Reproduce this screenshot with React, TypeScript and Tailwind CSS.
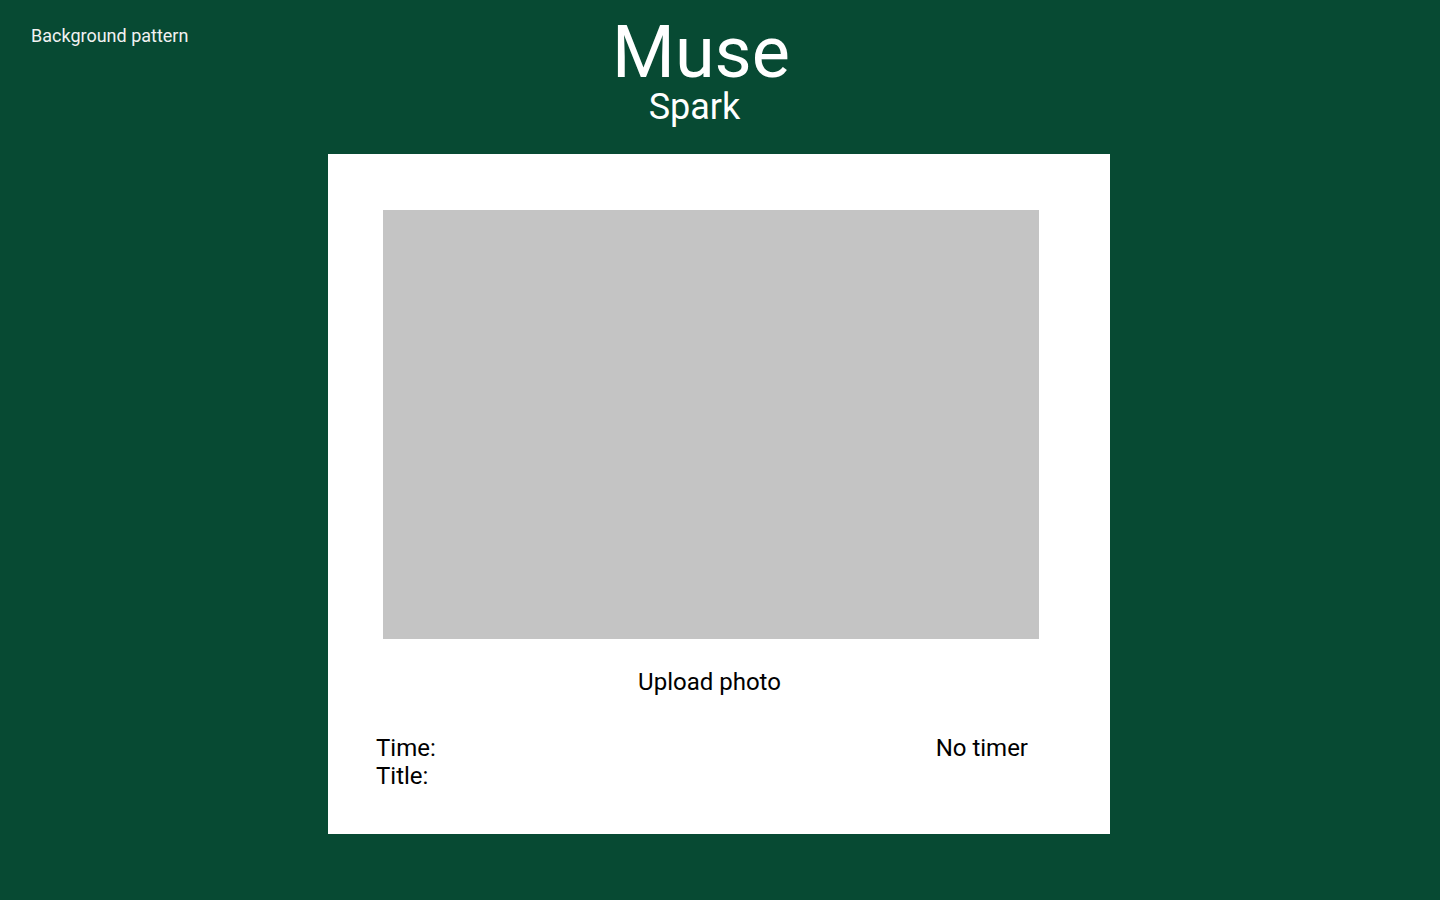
function App() {
  return (
    <div className="min-h-[900px] w-full bg-[#074a33] font-['Roboto',sans-serif]">
      <header className="grid grid-cols-[1fr_auto_1fr]">
        <div className="pl-[31px] pt-[24px]">
          <span className="text-[18px] leading-6 text-[#f2f2f2]">Background pattern</span>
        </div>
        <div className="flex flex-col items-center pr-[38px] pt-[13px] text-white">
          <h1 className="text-[72px] leading-[80px]">Muse</h1>
          <h2 className="pr-[13px] text-[36px] leading-[28px]">Spark</h2>
        </div>
        <div />
      </header>

      <div className="flex justify-center pr-[2px] pt-[33px]">
        <div className="flex h-[680px] w-[782px] flex-col bg-white text-black">
          <div className="pl-[55px] pr-[71px] pt-[56px]">
            <div className="h-[429px] w-full bg-[#c4c4c4]" />
          </div>
          <div className="pl-[52px] pr-[71px] pt-[29px] text-center text-2xl leading-7">
            Upload photo
          </div>
          <div className="flex justify-between pl-[48px] pr-[82px] pt-[38px] text-2xl leading-7">
            <div className="flex flex-col">
              <span>Time:</span>
              <span>Title:</span>
            </div>
            <span>No timer</span>
          </div>
        </div>
      </div>
    </div>
  );
}

export default App;
